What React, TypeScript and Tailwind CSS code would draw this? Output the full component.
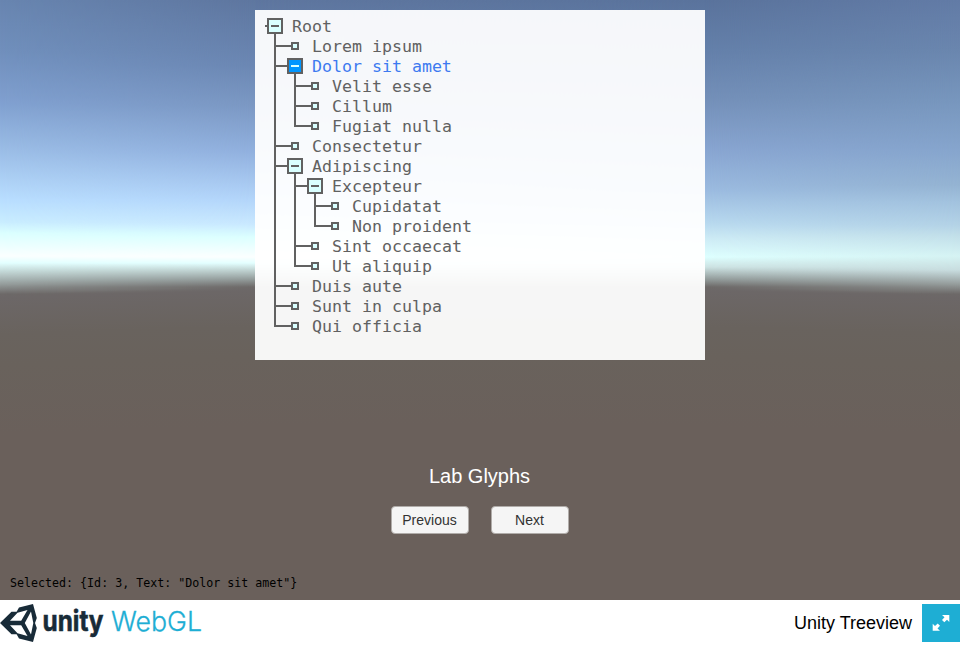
import React from "react";

type Item = { label: string; kids?: Item[]; selected?: boolean };

const tree: Item[] = [
  { label: "Lorem ipsum" },
  { label: "Dolor sit amet", selected: true, kids: [{ label: "Velit esse" }, { label: "Cillum" }, { label: "Fugiat nulla" }] },
  { label: "Consectetur" },
  {
    label: "Adipiscing",
    kids: [
      { label: "Excepteur", kids: [{ label: "Cupidatat" }, { label: "Non proident" }] },
      { label: "Sint occaecat" },
      { label: "Ut aliquip" },
    ],
  },
  { label: "Duis aute" },
  { label: "Sunt in culpa" },
  { label: "Qui officia" },
];

function Toggle({ selected }: { selected?: boolean }) {
  return (
    <span
      className={`flex size-4 shrink-0 items-center justify-center border-2 border-[#616161] ${
        selected ? "bg-[#0096ff]" : "bg-[#d9ffff]"
      }`}
    >
      <span className={`h-0.5 w-2 ${selected ? "bg-[#d9ffff]" : "bg-[#616161]"}`} />
    </span>
  );
}

function Branch({ item, last }: { item: Item; last: boolean }) {
  return (
    <li className="relative">
      <span className={`absolute left-0 -top-0.5 w-0.5 bg-[#616161] ${last ? "h-[13px]" : "h-[calc(100%+2px)]"}`} />
      <div className="flex h-5 items-center">
        <span className={`h-0.5 shrink-0 bg-[#616161] ${item.kids ? "w-[13px]" : "w-[17px]"}`} />
        {item.kids ? (
          <Toggle selected={item.selected} />
        ) : (
          <span className="size-2 shrink-0 border-2 border-[#616161] bg-[#d9ffff]" />
        )}
        <span
          className={`whitespace-pre pt-0.5 leading-5 ${item.kids ? "ml-[9px]" : "ml-[13px]"} ${
            item.selected ? "text-[#3d7af0]" : "text-[#616161]"
          }`}
        >
          {item.label}
        </span>
      </div>
      {item.kids && <Branches items={item.kids} />}
    </li>
  );
}

function Branches({ items }: { items: Item[] }) {
  return (
    <ul className="ml-5">
      {items.map((k, i) => (
        <Branch key={k.label} item={k} last={i === items.length - 1} />
      ))}
    </ul>
  );
}

function Sky() {
  return (
    <div className="absolute inset-0 -z-10">
      <div className="absolute inset-0 bg-[linear-gradient(180deg,#6885b0_0px,#708fbc_50px,#7f9fcf_100px,#9bbde6_150px,#b9deff_200px,#c9edff_222px,#dbffff_233px,#fbffff_256px,#e3ffff_263px,#c5dad9_271px,#969e9d_284px,#6d6968_294px)]" />
      <div className="absolute inset-0 bg-[linear-gradient(180deg,#5e769f_0px,#6b87b3_65px,#7b98c3_105px,#90afdd_150px,#b3d5fa_200px,#c9e8ff_224px,#dbffff_237px,#fbffff_257px,#e3ffff_263px,#c0d3d2_270px,#8f9796_280px,#6d6968_287px)] [mask-image:linear-gradient(90deg,transparent_0px,#000_255px)]" />
      <div className="absolute inset-0 bg-[linear-gradient(180deg,#5a739c_0px,#6480aa_50px,#7490b9_100px,#88a5d1_150px,#9bbbe0_190px,#b8d9ef_223px,#cfedf6_240px,#deffff_257px,#cde3e3_267px,#8f9796_280px,#6d6968_287px)] [mask-image:linear-gradient(90deg,transparent_255px,#000_705px)]" />
      <div className="absolute inset-0 bg-[linear-gradient(180deg,#627ba6_0px,#6a86ae_50px,#7796bd_100px,#86a5cd_150px,#94b3d2_185px,#a2c2de_202px,#b3d2e6_225px,#c2dfe9_236px,#d5f3f3_256px,#c8dddf_270px,#969e9d_284px,#6d6968_294px)] [mask-image:linear-gradient(90deg,transparent_705px,#000_960px)]" />
      <div className="absolute inset-0 bg-[radial-gradient(3578px_1000px_at_480px_1285px,#6a605b_0%,#6a605b_86%,#69625c_93%,#69635e_96%,#6c6767_99.6%,transparent_100%)]" />
    </div>
  );
}

function UnityMark() {
  return (
    <svg className="h-[38px] w-[38px] shrink-0" viewBox="0 0 38 38" fill="#182b38">
      <path
        fillRule="evenodd"
        d="M33 0 36.8 14 35 19 36.8 24 33 38 19 34.4 16.6 30.2H11.5L0 19 11.5 7.8H16.6L19 3.6ZM27.5 6 17.5 8.8 10 16.8H21.2ZM31 7.5 24.8 19 31 30.5 33.3 19ZM10 21.2 17.5 29.2 27.5 32 21.2 21.2Z"
      />
    </svg>
  );
}

export default function App() {
  return (
    <div className="flex h-[645px] w-[960px] flex-col overflow-hidden bg-white font-['Liberation_Sans',Arial,sans-serif]">
      <main className="relative isolate flex h-[600px] flex-col items-center pt-[10px]">
        <Sky />

        <section className="h-[350px] w-[450px] bg-[#fffffff0] pl-[10px] pt-[6px] font-['DejaVu_Sans_Mono',monospace] text-[16.6px]">
          <div className="flex h-5 items-center text-[#616161]">
            <span className="h-0.5 w-0.5 bg-[#616161]" />
            <Toggle />
            <span className="ml-[9px] pt-0.5 leading-5">Root</span>
          </div>
          <div className="-ml-[11px]">
            <Branches items={tree} />
          </div>
        </section>

        <h1 className="mr-px mt-[104px] text-[20px] leading-6 text-white">Lab Glyphs</h1>
        <div className="mt-[18px] flex gap-[22px] text-[14px] text-[#323232]">
          <button className="h-7 w-[78px] rounded-[4px] border border-[#b0aca9] bg-[#f5f5f5] pr-px">Previous</button>
          <button className="h-7 w-[78px] rounded-[4px] border border-[#b0aca9] bg-[#f5f5f5] pr-px">Next</button>
        </div>
        <p className="mt-[41px] self-start pl-[10px] font-['DejaVu_Sans_Mono',monospace] text-[11.65px] leading-4 text-black">
          Selected: {"{"}Id: 3, Text: "Dolor sit amet"{"}"}
        </p>
      </main>

      <footer className="flex h-[45px] items-start pt-1">
        <UnityMark />
        <svg className="h-[41px] w-[170px] overflow-visible" viewBox="0 0 170 41">
          <text x="4.5" y="27" className="font-['Inter',sans-serif] text-[28px] font-bold" fill="#182b38" stroke="#182b38" strokeWidth="0.6" textLength="61" lengthAdjust="spacingAndGlyphs">
            unity
          </text>
          <text x="73" y="27" className="font-['Inter',sans-serif] text-[27.5px] font-light" fill="#1eaed4" stroke="#1eaed4" strokeWidth="0.3" textLength="91" lengthAdjust="spacingAndGlyphs">
            WebGL
          </text>
        </svg>
        <span className="ml-auto mr-[10px] text-[18px] leading-[38px] text-black">Unity Treeview</span>
        <button className="flex size-[38px] items-center justify-center bg-[#1eaed4]">
          <svg className="size-[38px]" viewBox="0 0 38 38" fill="#fff">
            <path d="M20 11H27.3V18L25 15.8 22.3 18.3 20 16 22.5 13.3ZM10.7 19.7 13 22 15.7 19.5 18 21.8 15.5 24.5 18 26.7H10.7Z" />
          </svg>
        </button>
      </footer>
    </div>
  );
}
